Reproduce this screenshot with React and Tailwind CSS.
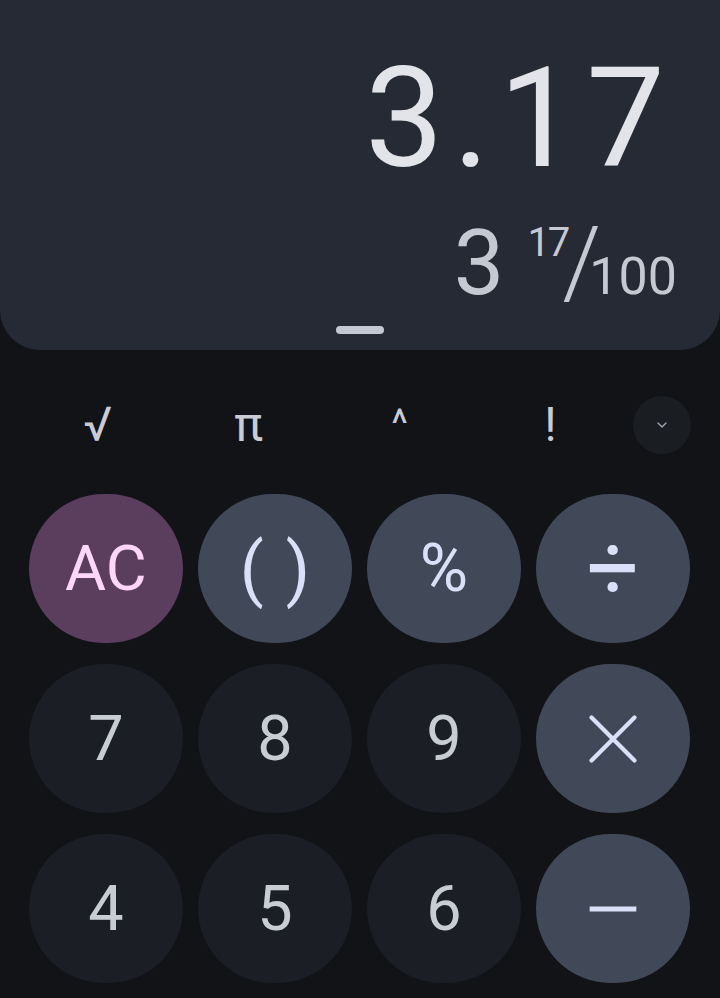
import { ChevronDown, X, Minus } from 'lucide-react'

const FONT = { fontFamily: 'Roboto, "Noto Sans", sans-serif' }

const ROWS = [
  [
    { label: 'AC', kind: 'clear' },
    { label: '( )', kind: 'op', glyph: 'parens' },
    { label: '%', kind: 'op', size: 'text-[66px]' },
    { label: '÷', kind: 'op', size: 'text-[92px]' },
  ],
  [
    { label: '7' },
    { label: '8' },
    { label: '9' },
    { label: '×', kind: 'op', glyph: 'times' },
  ],
  [
    { label: '4' },
    { label: '5' },
    { label: '6' },
    { label: '−', kind: 'op', glyph: 'minus' },
  ],
]

const KIND = {
  clear: 'bg-[#5b3d5d] text-[#fdd6f8]',
  op: 'bg-[#414858] text-[#dae0f7]',
  num: 'bg-[#1b1e24] text-[#c8ccd5]',
}

function Glyph({ label, glyph }) {
  if (glyph === 'times') return <X size={86} strokeWidth={1.2} aria-label={label} />
  if (glyph === 'minus') return <Minus size={80} strokeWidth={1.5} strokeLinecap="butt" aria-label={label} />
  if (glyph === 'parens')
    return (
      <span className="leading-none text-[70px] flex gap-[22px]">
        <span>(</span>
        <span>)</span>
      </span>
    )
  return <span className="leading-none">{label}</span>
}

function Key({ label, kind = 'num', size, glyph }) {
  return (
    <div
      className={`w-[154px] h-[149px] rounded-full flex items-center justify-center ${KIND[kind]} ${size || 'text-[63px]'}`}
    >
      <Glyph label={label} glyph={glyph} />
    </div>
  )
}

export default function App() {
  return (
    <div className="w-[720px] h-[998px] bg-[#111317] overflow-hidden" style={FONT}>
      {/* display */}
      <div className="h-[350px] bg-[#262a34] rounded-b-[40px] flex flex-col">
        <div className="mt-[48px] pr-[46px] flex justify-end text-[140px] leading-none text-[#e3e4ea] tracking-[9px]">
          3.17
        </div>
        <div className="mt-[24px] pr-[43px] flex justify-end items-baseline text-[#c5c9d2]">
          <span className="text-[90px] leading-none">3</span>
          <span className="text-[40px] leading-none ml-[23px] relative top-[-38px] tracking-[-2px]">17</span>
          <span className="text-[98px] leading-none ml-[-6px] font-light relative top-[2px]">/</span>
          <span className="text-[52px] leading-none ml-[-12px]">100</span>
        </div>
        <div className="self-center mt-auto mb-[16px] w-[48px] h-[8px] rounded-full bg-[#c5c8d2]" />
      </div>

      {/* scientific row */}
      <div className="h-[144px] pt-[6px] pl-[22px] flex items-center text-[#c9ccd5] text-[48px]">
        <div className="w-[151px] text-center leading-none">√</div>
        <div className="w-[151px] text-center leading-none">π</div>
        <div className="w-[151px] text-center leading-none text-[40px]">^</div>
        <div className="w-[151px] text-center leading-none">!</div>
        <div className="ml-[7px] w-[58px] h-[58px] rounded-full bg-[#1a1d22] flex items-center justify-center text-[#a3a8b2]">
          <ChevronDown size={16} strokeWidth={2} />
        </div>
      </div>

      {/* keypad */}
      <div className="pl-[29px] flex flex-col gap-[21px]">
        {ROWS.map((row, i) => (
          <div key={i} className="flex gap-[15px]">
            {row.map(k => (
              <Key key={k.label} {...k} />
            ))}
          </div>
        ))}
      </div>
    </div>
  )
}
